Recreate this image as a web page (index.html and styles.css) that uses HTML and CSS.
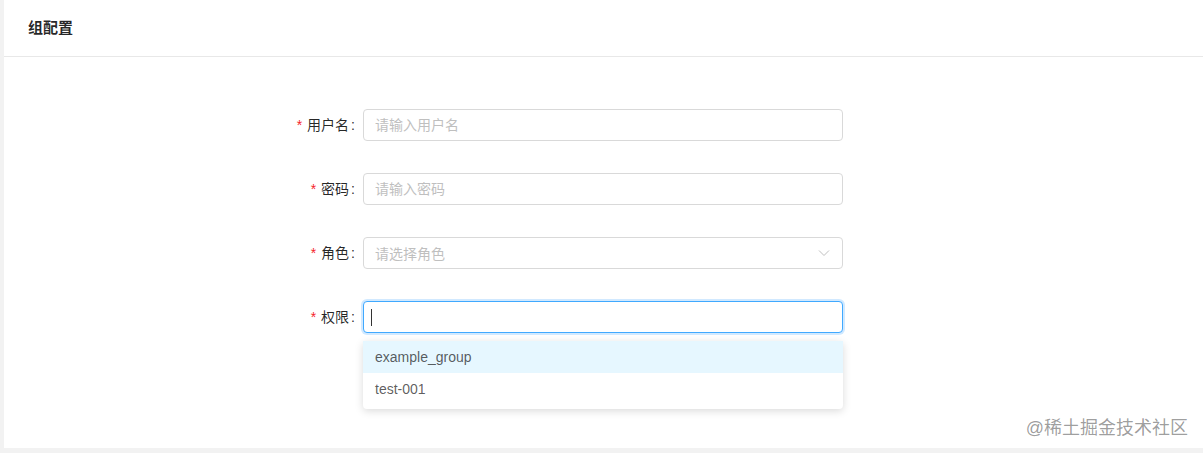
FILE: index.html
```html
<!DOCTYPE html>
<html lang="zh-CN">
<head>
  <meta charset="UTF-8">
  <meta name="viewport" content="width=device-width, initial-scale=1.0">
  <title>组配置</title>
  <link rel="stylesheet" href="styles.css">
</head>
<body>
  <div class="card">
    <div class="card-head">组配置</div>
    <div class="card-body">
      <form class="form">
        <div class="form-item">
          <label class="form-label required">用户名</label>
          <div class="form-control">
            <input class="input" type="text" placeholder="请输入用户名">
          </div>
        </div>
        <div class="form-item">
          <label class="form-label required">密码</label>
          <div class="form-control">
            <input class="input" type="password" placeholder="请输入密码">
          </div>
        </div>
        <div class="form-item">
          <label class="form-label required">角色</label>
          <div class="form-control">
            <div class="select">
              <span class="placeholder">请选择角色</span>
              <svg class="arrow" width="12" height="12" viewBox="0 0 12 12">
                <path d="M1 3.5 L6 8.5 L11 3.5" fill="none" stroke="#bfbfbf" stroke-width="1"/>
              </svg>
            </div>
          </div>
        </div>
        <div class="form-item">
          <label class="form-label required">权限</label>
          <div class="form-control">
            <div class="select focused">
              <span class="caret"></span>
            </div>
            <ul class="dropdown">
              <li class="option active">example_group</li>
              <li class="option">test-001</li>
            </ul>
          </div>
        </div>
      </form>
    </div>
    <div class="watermark">@稀土掘金技术社区</div>
  </div>
</body>
</html>
```

FILE: styles.css
```css
body {
  margin: 0;
  padding: 0 0 5px 4px;
  background-color: #f2f2f2;
  font-family: "Liberation Sans", "Noto Sans CJK SC", sans-serif;
  font-size: 14px;
  color: rgba(0, 0, 0, 0.65);
}

.card {
  position: relative;
  background-color: #fff;
  height: 448px;
}

.card-head {
  height: 56px;
  line-height: 56px;
  padding: 0 24px;
  border-bottom: 1px solid #e8e8e8;
  font-size: 15px;
  font-weight: 600;
  color: rgba(0, 0, 0, 0.85);
}

.card-body {
  padding: 52px 24px 0;
}

.form {
  display: flex;
  flex-direction: column;
  gap: 32px;
}

.form-item {
  display: flex;
  align-items: flex-start;
  height: 32px;
}

.form-label {
  width: 335px;
  text-align: right;
  line-height: 32px;
  color: rgba(0, 0, 0, 0.85);
  padding-right: 8px;
  box-sizing: border-box;
  flex-shrink: 0;
}

.form-label::after {
  content: ":";
  margin-left: 2px;
}

.form-label.required::before {
  content: "*";
  color: #f5222d;
  margin-right: 5px;
  font-family: "Liberation Sans", sans-serif;
}

.form-control {
  position: relative;
  width: 480px;
}

.input, .select {
  display: flex;
  align-items: center;
  width: 100%;
  height: 32px;
  box-sizing: border-box;
  padding: 4px 11px;
  border: 1px solid #d9d9d9;
  border-radius: 4px;
  font-family: inherit;
  font-size: 14px;
  color: rgba(0, 0, 0, 0.65);
  background-color: #fff;
  outline: none;
}

.input::placeholder, .placeholder {
  color: #bfbfbf;
}

.select {
  justify-content: space-between;
}

.select.focused {
  border-color: #40a9ff;
  box-shadow: 0 0 0 2px rgba(24, 144, 255, 0.2);
}

.arrow {
  margin-right: 1px;
}

.caret {
  display: block;
  width: 1px;
  height: 17px;
  margin-left: -4px;
  background-color: #333;
}

.dropdown {
  position: absolute;
  top: 40px;
  left: 0;
  right: 0;
  margin: 0;
  padding: 0 0 4px;
  list-style: none;
  background-color: #fff;
  border-radius: 4px;
  box-shadow: 0 2px 8px rgba(0, 0, 0, 0.15);
  z-index: 10;
}

.option {
  height: 32px;
  line-height: 32px;
  padding: 0 12px;
  color: rgba(0, 0, 0, 0.65);
}

.option.active {
  background-color: #e6f7ff;
}

.watermark {
  position: absolute;
  right: 15px;
  bottom: 9px;
  font-size: 18px;
  color: rgba(0, 0, 0, 0.4);
}
```
